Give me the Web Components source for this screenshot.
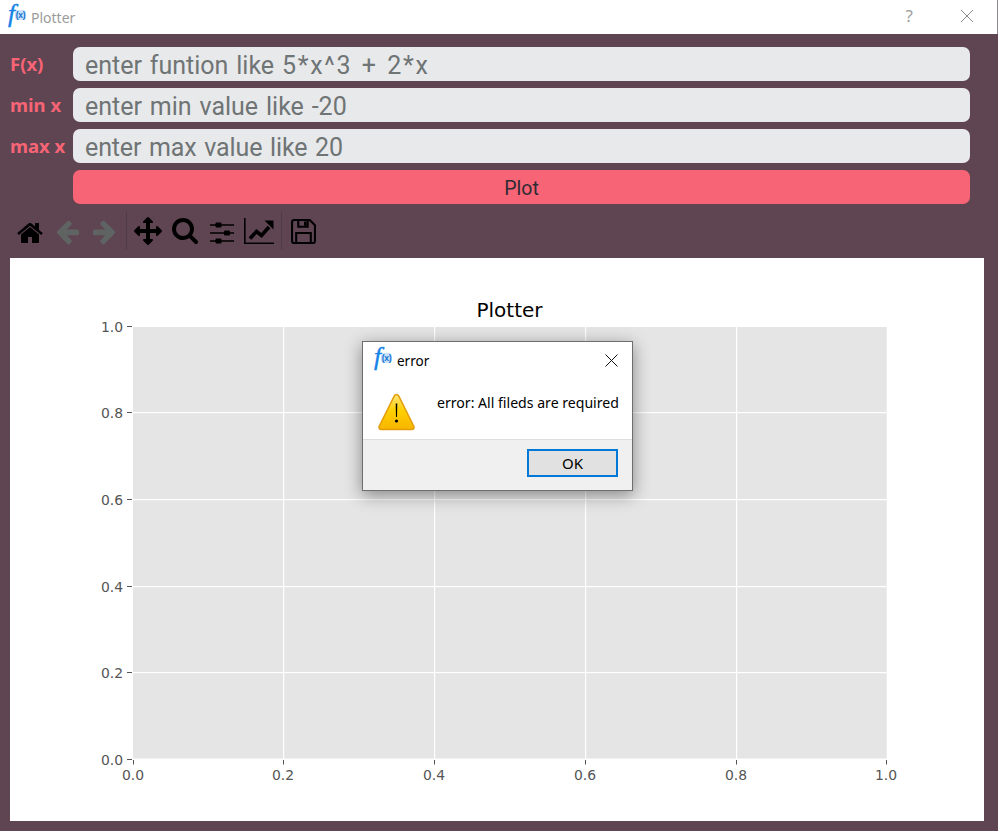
<!DOCTYPE html>
<html>
<head>
<meta charset="utf-8">
<title>Plotter</title>
<style>
    html, body { margin: 0; height: 100%; overflow: hidden; }
    body { font-family: "Noto Sans", sans-serif; background: #5f4452; }
</style>
</head>
<body>
<plotter-app></plotter-app>

<script>
class FxLogo extends HTMLElement {
    constructor() {
        super();
        this.attachShadow({mode: 'open'}).innerHTML = `
        <style>
            :host { display: inline-flex; width: 20px; height: 21px; position: relative; flex: none; }
            .f {
                font: italic 26px/21px "Liberation Serif", serif; color: #1583e8;
                margin: -4px 0 0 2px; -webkit-text-stroke: .4px #1583e8;
            }
            .x {
                position: absolute; left: 9px; top: 3px; width: 11px; height: 10px;
                background: #c9e3fb; border-radius: 3px; color: #0f6fd0;
                font: bold 8.500px/10px "Liberation Sans", sans-serif; text-align: center; letter-spacing: -.3px;
            }
        </style>
        <span class="f">f</span><span class="x">(x)</span>`;
    }
}
customElements.define('fx-logo', FxLogo);

class WinTitlebar extends HTMLElement {
    constructor() {
        super();
        this.attachShadow({mode: 'open'}).innerHTML = `
        <style>
            :host {
                display: flex; align-items: center; height: 34px; background: #fff;
                padding: 0 25px 0 6px; color: #9b9b9b; font: 14px "Noto Sans", sans-serif;
                box-shadow: inset -1px 0 0 #8f8790;
            }
            .name { margin-left: 5px; flex: 1; }
            .help { font-size: 17px; margin-right: 48px; color: #a0a0a0; margin-bottom: 3px; }
            svg { display: block; margin-bottom: 3px; }
        </style>
        <fx-logo></fx-logo>
        <span class="name"><slot></slot></span>
        <span class="help">?</span>
        <svg width="12" height="12" viewBox="0 0 12 12"><path d="M0 0l12 12M12 0L0 12" stroke="#8a8a8a" fill="none"/></svg>`;
    }
}
customElements.define('win-titlebar', WinTitlebar);

class PlotField extends HTMLElement {
    constructor() {
        super();
        this.attachShadow({mode: 'open'}).innerHTML = `
        <style>
            :host { display: grid; grid-template-columns: 63px 1fr; align-items: center; }
            .label { font: bold 18.500px "Noto Sans", sans-serif; color: #f76476; padding-bottom: 2px; }
            .box {
                height: 34px; background: #e8e9eb; border-radius: 7px;
                padding-left: 12px; color: #6f7475; font: 25px/38px Roboto, sans-serif;
                word-spacing: .066em; white-space: nowrap;
            }
        </style>
        <span class="label">${this.getAttribute('label')}</span>
        <div class="box"><slot></slot></div>`;
    }
}
customElements.define('plot-field', PlotField);

class PlotButton extends HTMLElement {
    constructor() {
        super();
        this.attachShadow({mode: 'open'}).innerHTML = `
        <style>
            :host { display: block; margin-left: 63px; }
            button {
                display: block; width: 100%; height: 34px; border: 0; padding: 2px 0 0; border-radius: 7px;
                background: #f76476; color: #2e2b33; font: 19.500px Roboto, sans-serif;
            }
        </style>
        <button><slot></slot></button>`;
    }
}
customElements.define('plot-button', PlotButton);

const ICONS = {
    home: ['0 0 1792 1792', '<path d="M1472 992v480q0 26-19 45t-45 19h-384v-384h-256v384h-384q-26 0-45-19t-19-45v-480q0-1 .5-3t.5-3l575-474 575 474q1 2 1 6zm223-69l-62 74q-8 9-21 11h-3q-13 0-21-7l-692-577-692 577q-12 8-24 7-13-2-21-11l-62-74q-8-10-7-23.500t11-21.500l719-599q32-26 76-26t76 26l244 204v-195q0-14 9-23t23-9h192q14 0 23 9t9 23v408l219 182q10 8 11 21.500t-7 23.500z"/>'],
    back: ['0 0 1792 1792', '<path d="M1664 896v128q0 53-32.500 90.500t-84.500 37.500h-704l293 294q38 36 38 90t-38 90l-75 76q-37 37-90 37-52 0-91-37l-651-652q-37-37-37-90 0-52 37-91l651-650q38-38 91-38 52 0 90 38l75 74q38 38 38 91t-38 91l-293 293h704q52 0 84.500 37.500t32.500 90.500z"/>'],
    forward: ['0 0 1792 1792', '<path d="M1600 960q0 54-37 91l-651 651q-39 37-91 37-51 0-90-37l-75-75q-38-38-38-91t38-91l293-293h-704q-52 0-84.500-37.500t-32.500-90.500v-128q0-53 32.500-90.500t84.500-37.500h704l-293-294q-38-36-38-90t38-90l75-75q38-38 90-38 53 0 91 38l651 651q37 35 37 90z"/>'],
    move: ['0 0 1792 1792', '<path d="M1792 896q0 26-19 45l-256 256q-19 19-45 19t-45-19-19-45v-128h-384v384h128q26 0 45 19t19 45-19 45l-256 256q-19 19-45 19t-45-19l-256-256q-19-19-19-45t19-45 45-19h128v-384h-384v128q0 26-19 45t-45 19-45-19l-256-256q-19-19-19-45t19-45l256-256q19-19 45-19t45 19 19 45v128h384v-384h-128q-26 0-45-19t-19-45 19-45l256-256q19-19 45-19t45 19l256 256q19 19 19 45t-19 45-45 19h-128v384h384v-128q0-26 19-45t45-19 45 19l256 256q19 19 19 45z"/>'],
    zoom: ['0 0 1792 1792', '<path d="M1216 832q0-185-131.500-316.500t-316.500-131.500-316.500 131.500-131.500 316.500 131.500 316.500 316.500 131.500 316.500-131.500 131.500-316.500zm512 832q0 52-38 90t-90 38q-54 0-90-38l-343-342q-179 124-399 124-143 0-273.500-55.500t-225-150-150-225-55.500-273.500 55.500-273.500 150-225 225-150 273.500-55.500 273.500 55.500 225 150 150 225 55.500 273.500q0 220-124 399l343 343q37 37 37 90z"/>'],
    sliders: ['0 0 24 22', '<path d="M0 3h24M0 11h24M0 19h24" stroke="#000" stroke-width="1.400"/><rect x="5.500" y="0.500" width="6" height="5" rx="1"/><rect x="14" y="8.500" width="6" height="5" rx="1"/><rect x="5.500" y="16.500" width="6" height="5" rx="1"/>'],
    chart: ['0 0 30 26', '<path d="M.8 0v25.200h29.200" stroke="#000" stroke-width="1.600" fill="none"/><path d="M6 20.500l6.500-7 5 4L25 9" stroke="#000" stroke-width="3.600" fill="none"/><path d="M20.500 2.500h9v9z"/>'],
    save: ['0 0 24 24', '<path d="M1 3q0-2 2-2h15l5 5v15q0 2-2 2H3q-2 0-2-2z" stroke="#000" stroke-width="2" fill="none"/><path d="M7 1.500v6h9v-6M5 22.500v-9h14v9" stroke="#000" stroke-width="2" fill="none"/><rect x="12.500" y="2.500" width="2.500" height="4"/>']
};

class NavToolbar extends HTMLElement {
    constructor() {
        super();
        const btn = (name, w, h, off, cls) => `
            <span class="btn${off ? ' off' : ''}${cls ? ' ' + cls : ''}"><svg width="${w}" height="${h}" viewBox="${ICONS[name][0]}">${ICONS[name][1]}</svg></span>`;
        this.attachShadow({mode: 'open'}).innerHTML = `
        <style>
            :host { display: flex; align-items: center; height: 46px; padding: 0 0 0 11.500px; margin: 4px 0; }
            .btn { width: 37px; display: flex; justify-content: center; align-items: center; }
            .btn svg { display: block; }
            .btn.off svg { fill: #5f6463; }
            .low svg { margin-top: 4px; }
            .high svg { margin-bottom: 2px; }
            .sep { width: 1px; height: 38px; margin: 0 3px; background: #4f3c47; }
        </style>
        ${btn('home', 28, 28, false, 'low')}${btn('back', 27, 27, true)}${btn('forward', 27, 27, true)}
        <span class="sep"></span>
        ${btn('move', 28, 28)}${btn('zoom', 28, 28, false, 'high')}${btn('sliders', 24, 22, false, 'low')}${btn('chart', 30, 26)}
        <span class="sep"></span>
        ${btn('save', 25, 25)}`;
    }
}
customElements.define('nav-toolbar', NavToolbar);

class PlotCanvas extends HTMLElement {
    constructor() {
        super();
        const L = 123, R = 876.700, T = 69, B = 501;
        const vals = ['0.0', '0.2', '0.4', '0.6', '0.8', '1.0'];
        const xs = [123, 273, 424, 575, 726, 876];
        const ys = [501, 414, 328, 241, 154, 68];
        const grid = xs.slice(1, 5).map(x => `<rect x="${x}" y="${T}" width="1.200" height="${B - T}" fill="#fff"/>`).join('')
            + ys.slice(1, 5).map(y => `<rect x="${L}" y="${y}" width="${R - L}" height="1.200" fill="#fff"/>`).join('');
        const ticks = xs.map((x, i) => `<rect x="${x}" y="${B + 1}" width="1" height="4.500" fill="#555"/>
            <text x="${x}" y="${B + 21}" text-anchor="middle">${vals[i]}</text>`).join('')
            + ys.map((y, i) => `<rect x="${L - 6}" y="${y}" width="5" height="1" fill="#555"/>
            <text x="${L - 10}" y="${y + 5.500}" text-anchor="end">${vals[i]}</text>`).join('');
        this.attachShadow({mode: 'open'}).innerHTML = `
        <style>
            :host { display: block; position: relative; height: 563px; margin: 0 14px 10px 10px; background: #fff; }
            svg { display: block; }
            text { font: 13.900px "DejaVu Sans", sans-serif; fill: #555; }
            text.title { font-size: 20px; fill: #000; }
            ::slotted(*) { position: absolute; left: 352px; top: 83px; }
        </style>
        <svg width="974" height="563" viewBox="0 0 974 563">
            <text class="title" x="499.500" y="59" text-anchor="middle">${this.getAttribute('title-text')}</text>
            <rect x="${L}" y="${T}" width="${R - L}" height="${B - T - .5}" fill="#e5e5e5"/>
            ${grid}${ticks}
        </svg>
        <slot></slot>`;
    }
}
customElements.define('plot-canvas', PlotCanvas);

class ErrorDialog extends HTMLElement {
    constructor() {
        super();
        this.attachShadow({mode: 'open'}).innerHTML = `
        <style>
            :host {
                display: flex; flex-direction: column; box-sizing: border-box; width: 271px; height: 150px;
                background: #fff; border: 1px solid #6e6e6e; box-shadow: 0 4px 16px rgba(0,0,0,.42);
                font: 13.500px "Noto Sans", sans-serif; color: #000;
            }
            .head { display: flex; align-items: center; height: 37px; padding: 0 14px 0 9px; }
            .head span { flex: 1; margin-left: 5px; }
            .head svg { display: block; }
            .body { display: flex; height: 60px; padding-left: 15px; box-sizing: border-box; }
            .body svg { margin-top: 14px; flex: none; }
            .msg { margin: 14px 0 0 22px; white-space: nowrap; font-size: 14.100px; }
            .foot { flex: 1; display: flex; justify-content: flex-end; padding: 9px 14px 0 0; background: #f0f0f0; border-top: 1px solid #dfdfdf; }
            button {
                box-sizing: border-box; width: 91px; height: 28px; padding: 0;
                background: #e1e1e1; border: 2px solid #0078d7; font: inherit; font-size: 15px; color: inherit;
            }
        </style>
        <div class="head">
            <fx-logo></fx-logo><span>${this.getAttribute('heading')}</span>
            <svg width="13" height="13" viewBox="0 0 13 13"><path d="M.5.5l12 12M12.500.5l-12 12" stroke="#111" fill="none"/></svg>
        </div>
        <div class="body">
            <svg width="37" height="38" viewBox="0 0 37 38">
                <defs><linearGradient id="w" x1="0" y1="0" x2="0" y2="1"><stop offset="0" stop-color="#ffe680"/><stop offset=".45" stop-color="#ffd000"/><stop offset="1" stop-color="#f7b500"/></linearGradient></defs>
                <path d="M18.500 1.500c-1 0-1.700.6-2.300 1.700L1.300 33c-.9 2 .2 3.500 2 3.500h30.400c1.800 0 2.900-1.500 2-3.500L20.800 3.200c-.6-1.100-1.300-1.700-2.300-1.700z" fill="url(#w)" stroke="#e39c0c" stroke-width="1.500"/>
                <path d="M17.700 10.500h1.600l-.3 13.500h-1z"/><circle cx="18.500" cy="28" r="1.600"/>
            </svg>
            <div class="msg"><slot></slot></div>
        </div>
        <div class="foot"><button>OK</button></div>`;
    }
}
customElements.define('error-dialog', ErrorDialog);

class PlotterApp extends HTMLElement {
    constructor() {
        super();
        this.attachShadow({mode: 'open'}).innerHTML = `
        <style>
            :host { display: flex; flex-direction: column; height: 831px; background: #5f4452; }
            .form { display: flex; flex-direction: column; gap: 7px; padding: 13px 28px 0 10px; }
            .sym { letter-spacing: 1.700px; }
            .tight { letter-spacing: -.13px; }
        </style>
        <win-titlebar>Plotter</win-titlebar>
        <div class="form">
            <plot-field label="F(x)">enter funtion like <span class="sym">5*x^3 + 2*x</span></plot-field>
            <plot-field label="min x">enter min value like -20</plot-field>
            <plot-field label="max x"><span class="tight">enter max value like 20</span></plot-field>
            <plot-button>Plot</plot-button>
        </div>
        <nav-toolbar></nav-toolbar>
        <plot-canvas title-text="Plotter">
            <error-dialog heading="error">error: All fileds are required</error-dialog>
        </plot-canvas>`;
    }
}
customElements.define('plotter-app', PlotterApp);
</script>
</body>
</html>
